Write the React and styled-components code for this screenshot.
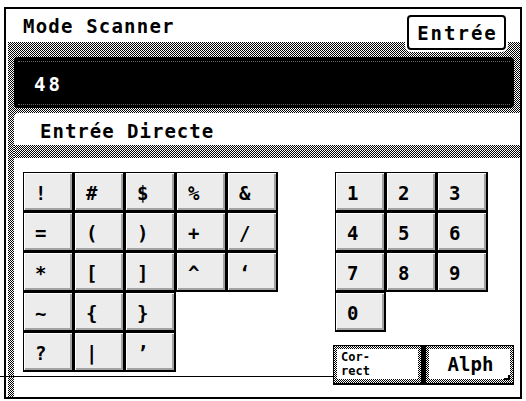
import React from 'react';
import styled, { createGlobalStyle } from 'styled-components';

const Global = createGlobalStyle`
  html, body { margin: 0; padding: 0; background: #fff; }
  body {
    font-family: "DejaVu Sans Mono", "Liberation Mono", monospace;
    color: #000;
  }
`;

// 1px checkerboard: vertical and horizontal stripes combined by difference
const stipple = `
  background-color: #000;
  background-image:
    linear-gradient(90deg, #fff 50%, #000 50%),
    linear-gradient(180deg, #fff 50%, #000 50%);
  background-size: 2px 2px;
  background-blend-mode: difference;
`;

const Page = styled.div`
  position: relative;
  width: 526px;
  height: 401px;
  padding: 7px 0 0 4px;
  box-sizing: border-box;
`;

const Frame = styled.div`
  width: 518px;
  height: 392px;
  box-sizing: border-box;
  border: 2px solid #000;
  background: #fff;
  display: flex;
  flex-direction: column;
`;

const Header = styled.div`
  height: 33px;
  flex: none;
  display: flex;
  align-items: flex-start;
  justify-content: space-between;
`;

const Title = styled.div`
  margin: 8px 0 0 17px;
  font-weight: bold;
  font-size: 19px;
  line-height: 19px;
  letter-spacing: 1.2px;
`;

const EnterButton = styled.div`
  position: relative;
  z-index: 1;
  margin: 6px 14px 0 0;
  width: 99px;
  height: 35px;
  box-sizing: border-box;
  border: 2px solid #000;
  border-radius: 4px;
  background: #fff;
  box-shadow: 0 0 0 2px #fff;
  display: flex;
  align-items: center;
  justify-content: center;
  font-weight: bold;
  font-size: 19px;
  letter-spacing: 2px;
  padding-left: 2px;
`;

const Body = styled.div`
  flex: 1;
  margin-left: 2px;
  display: flex;
  flex-direction: column;
  ${stipple}
`;

const Display = styled.div`
  position: relative;
  flex: none;
  height: 51px;
  margin: 15px 6px 5px 6px;
  border-radius: 4px;
  background: #000;
  color: #fff;
  display: flex;
  align-items: center;
  padding: 2px 0 0 20px;
  box-sizing: border-box;
  font-weight: bold;
  font-size: 19px;
  letter-spacing: 3px;
  &::before, &::after {
    content: '';
    position: absolute;
    left: 4px;
    right: 4px;
    border-top: 1px dotted #666;
  }
  &::before { top: 4px; }
  &::after { bottom: 3px; }
`;

const Panel = styled.div`
  flex: 1;
  margin-left: 6px;
  background: #fff;
  border-top-left-radius: 5px;
  display: flex;
  flex-direction: column;
`;

const PanelTitle = styled.div`
  height: 32px;
  box-sizing: border-box;
  padding: 9px 0 0 26px;
  font-weight: bold;
  font-size: 19px;
  line-height: 19px;
  letter-spacing: 1px;
`;

const Stripe = styled.div`
  height: 13px;
  flex: none;
  ${stipple}
`;

const Keys = styled.div`
  display: flex;
  align-items: flex-start;
  padding: 14px 0 0 9px;
  gap: 55px;
`;

const KeyBlock = styled.div`
  display: flex;
  flex-direction: column;
  margin-left: ${p => p.$inset || 0}px;
`;

const KeyRow = styled.div`
  display: flex;
`;

const Key = styled.div`
  box-sizing: border-box;
  width: 51px;
  height: 40px;
  border-style: solid;
  border-color: #000;
  border-width: 1px 2px 2px 1px;
  background: #ececec;
  box-shadow: inset 1px 1px 0 #fff, inset -2px -2px 0 #a2a2a2;
  padding: 11px 0 0 11px;
  font-weight: bold;
  font-size: 19px;
  line-height: 19px;
`;

const RightColumn = styled.div`
  display: flex;
  flex-direction: column;
`;

const ActionRow = styled.div`
  display: flex;
  margin-top: 13px;
`;

// soft key: black rim, stippled inner band, white face
const SoftKey = styled.div`
  position: relative;
  box-sizing: border-box;
  width: ${p => p.$w}px;
  height: 40px;
  border: 1px solid #000;
  border-bottom-width: 2px;
  ${p => (p.$gapRight ? 'border-right-width: 4px;' : '')}
  padding: 3px 3px 4px 3px;
  ${stipple}
  display: flex;
`;

const SoftFace = styled.div`
  flex: 1;
  background: #fff;
  display: flex;
  flex-direction: column;
  align-items: ${p => (p.$center ? 'center' : 'flex-start')};
  justify-content: ${p => (p.$center ? 'center' : 'flex-start')};
  box-sizing: border-box;
  padding: ${p => (p.$center ? '1px 0 0 2px' : '1px 0 0 4px')};
  font-weight: bold;
  font-size: ${p => (p.$small ? 12 : 19)}px;
  line-height: ${p => (p.$small ? 14 : 19)}px;
`;

const CornerMark = styled.span`
  position: absolute;
  right: 3px;
  bottom: 3px;
  width: 4px;
  height: 3px;
  border-right: 2px solid #000;
  border-bottom: 2px solid #000;
`;

const Leader = styled.div`
  position: absolute;
  z-index: 2;
  left: 0;
  top: 376px;
  width: 333px;
  height: 1px;
  background: #000;
`;

const symbolRows = [
  ['!', '#', '$', '%', '&'],
  ['=', '(', ')', '+', '/'],
  ['*', '[', ']', '^', '‘'],
  ['~', '{', '}'],
  ['?', '|', '’'],
];

const digitRows = [
  ['1', '2', '3'],
  ['4', '5', '6'],
  ['7', '8', '9'],
  ['0'],
];

function KeyPad({ rows, inset }) {
  return (
    <KeyBlock $inset={inset}>
      {rows.map((row, i) => (
        <KeyRow key={i}>
          {row.map(k => (
            <Key key={k}>{k}</Key>
          ))}
        </KeyRow>
      ))}
    </KeyBlock>
  );
}

export default function App() {
  return (
    <>
      <Global />
      <Page>
        <Frame>
          <Header>
            <Title>Mode Scanner</Title>
            <EnterButton>Entrée</EnterButton>
          </Header>
          <Body>
            <Display>48</Display>
            <Panel>
              <PanelTitle>Entrée Directe</PanelTitle>
              <Stripe />
              <Keys>
                <KeyPad rows={symbolRows} />
                <RightColumn>
                  <KeyPad rows={digitRows} inset={2} />
                  <ActionRow>
                    <SoftKey $w={92} $gapRight>
                      <SoftFace $small>
                        <span>Cor-</span>
                        <span>rect</span>
                      </SoftFace>
                    </SoftKey>
                    <SoftKey $w={89}>
                      <SoftFace $center>Alph</SoftFace>
                      <CornerMark />
                    </SoftKey>
                  </ActionRow>
                </RightColumn>
              </Keys>
            </Panel>
          </Body>
        </Frame>
        <Leader />
      </Page>
    </>
  );
}
